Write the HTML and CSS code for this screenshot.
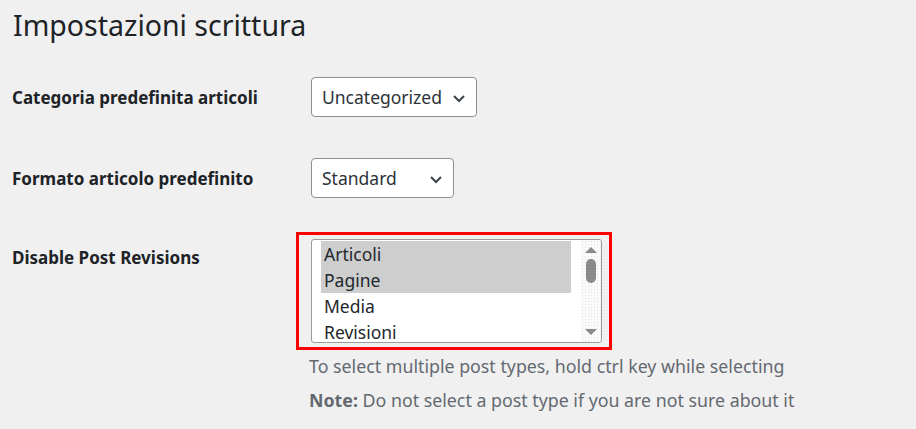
FILE: index.html
```html
<!DOCTYPE html>
<html lang="it">
<head>
<meta charset="utf-8">
<title>Impostazioni scrittura</title>
<link rel="stylesheet" href="styles.css">
</head>
<body>
<div class="wrap">
  <h1 class="title">Impostazioni scrittura</h1>
  <div class="form">
    <div class="row row-select">
      <div class="label">Categoria predefinita articoli</div>
      <div class="field">
        <div class="select select-cat">
          <span class="select-text">Uncategorized</span>
          <svg class="chev" width="14" height="10" viewBox="0 0 14 10"><path d="M2 3 L7 8 L12 3" fill="none" stroke="#3c434a" stroke-width="2"/></svg>
        </div>
      </div>
    </div>
    <div class="row row-select">
      <div class="label">Formato articolo predefinito</div>
      <div class="field">
        <div class="select select-format">
          <span class="select-text">Standard</span>
          <svg class="chev" width="14" height="10" viewBox="0 0 14 10"><path d="M2 3 L7 8 L12 3" fill="none" stroke="#3c434a" stroke-width="2"/></svg>
        </div>
      </div>
    </div>
    <div class="row row-list">
      <div class="label label-list">Disable Post Revisions</div>
      <div class="field">
        <div class="highlight">
          <div class="listbox">
            <div class="options">
              <div class="opt selected">Articoli</div>
              <div class="opt selected">Pagine</div>
              <div class="opt">Media</div>
              <div class="opt">Revisioni</div>
            </div>
            <div class="scrollbar">
              <svg class="arrow" width="14" height="8" viewBox="0 0 14 8"><path d="M1 7 L7 1 L13 7 Z" fill="#8a8a8a"/></svg>
              <div class="track"><div class="thumb"></div></div>
              <svg class="arrow" width="14" height="8" viewBox="0 0 14 8"><path d="M1 1 L7 7 L13 1 Z" fill="#8a8a8a"/></svg>
            </div>
          </div>
        </div>
        <p class="help">To select multiple post types, hold ctrl key while selecting</p>
        <p class="help"><strong>Note:</strong> Do not select a post type if you are not sure about it</p>
      </div>
    </div>
  </div>
</div>
</body>
</html>
```

FILE: styles.css
```css
html, body {
  margin: 0;
  padding: 0;
  background: #f0f0f1;
}
body {
  font-family: "Noto Sans", "Open Sans", sans-serif;
  color: #1d2327;
  width: 916px;
  height: 429px;
  overflow: hidden;
}
.wrap {
  padding: 0 0 0 12px;
}
.title {
  margin: 0;
  padding-top: 3px;
  padding-left: 1px;
  font-size: 28.5px;
  font-weight: 400;
  line-height: 44px;
  color: #1d2327;
}
.form {
  display: flex;
  flex-direction: column;
  margin-top: 30px;
  gap: 41px;
}
.row {
  display: flex;
  align-items: center;
}
.row-list {
  align-items: flex-start;
}
.label {
  width: 299px;
  font-size: 17px;
  font-weight: 700;
  color: #1d2327;
}
.label-list {
  padding-top: 7px;
}
.field {
  display: flex;
  flex-direction: column;
}
.select {
  box-sizing: border-box;
  height: 40px;
  border: 1px solid #8c8f94;
  border-radius: 4px;
  background: #fff;
  display: flex;
  align-items: center;
  padding: 0 10px 0 10px;
  font-size: 17.5px;
  color: #2c3338;
}
.select-cat { width: 166px; justify-content: space-between; }
.select-format { width: 143px; justify-content: space-between; }
.chev { margin-top: 1px; }
.highlight {
  margin-left: -15px;
  margin-top: -7px;
  width: 310px;
  height: 112px;
  border: 3px solid #ff0000;
  box-sizing: content-box;
  padding: 0;
  display: flex;
  align-items: center;
}
.listbox {
  box-sizing: border-box;
  margin-left: 12px;
  width: 291px;
  height: 104px;
  border: 1px solid #9a9a9a;
  border-radius: 3px;
  background: #fff;
  display: flex;
  overflow: hidden;
}
.options {
  flex: 1;
  padding: 1px 0 0 9px;
  display: flex;
  flex-direction: column;
}
.opt {
  height: 26px;
  line-height: 26px;
  font-size: 17.5px;
  color: #23282d;
  padding-left: 3px;
  width: 247px;
}
.opt.selected {
  background: #cecece;
}
.scrollbar {
  width: 20px;
  display: flex;
  flex-direction: column;
  align-items: center;
  padding: 6px 0 6px;
  background-color: #fbfbfb;
  background-image: radial-gradient(#e2e2e2 0.6px, transparent 0.8px);
  background-size: 3px 3px;
}
.arrow { flex: none; }
.track {
  flex: 1;
  display: flex;
  justify-content: center;
  padding-top: 5px;
}
.thumb {
  width: 10px;
  height: 24px;
  border-radius: 5px;
  background: #8a8a8a;
}
.help {
  margin: 0;
  margin-left: -2px;
  font-size: 17.8px;
  color: #646970;
  line-height: 24px;
}
.help:first-of-type {
  margin-top: 4px;
}
.help + .help {
  margin-top: 10px;
}
.help strong {
  font-weight: 700;
}
```
